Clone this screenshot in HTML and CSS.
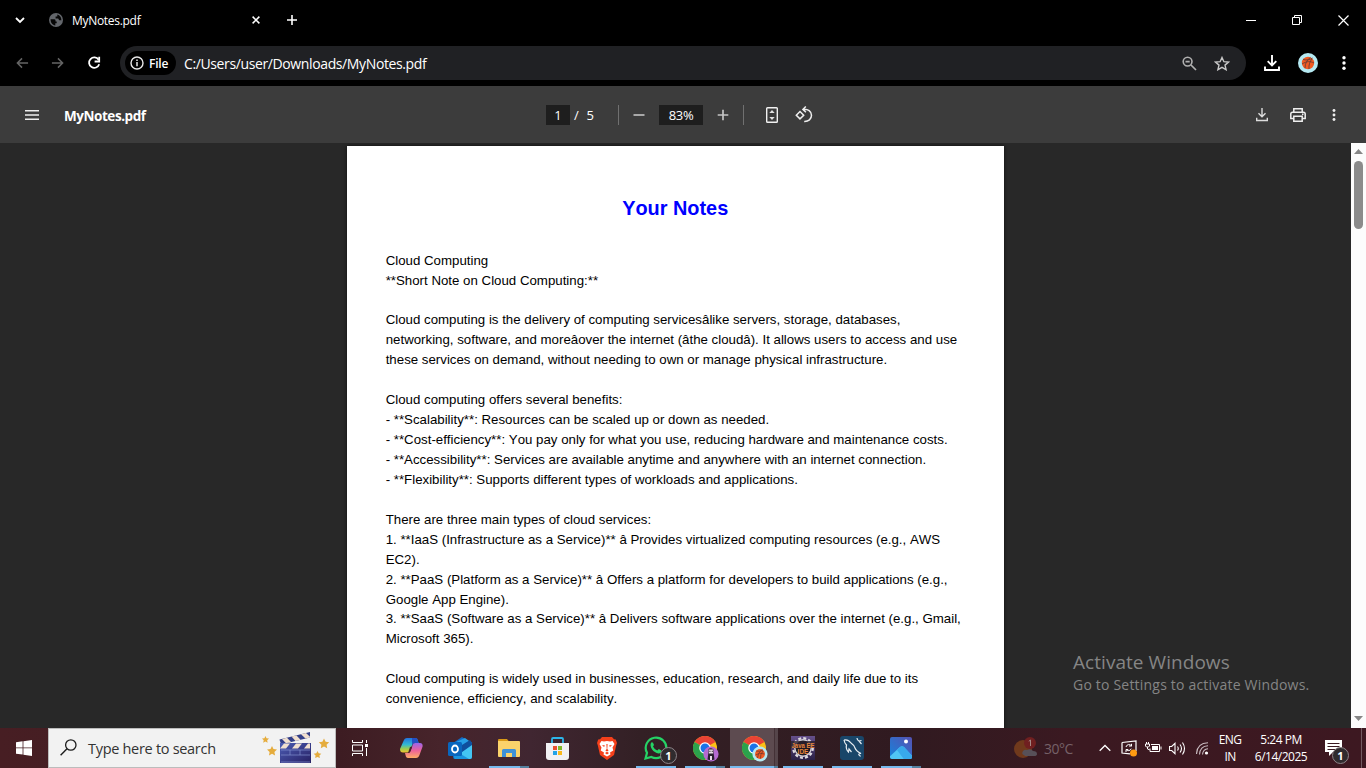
FILE: index.html
```html
<!DOCTYPE html>
<html lang="en">
<head>
<meta charset="utf-8">
<title>MyNotes.pdf</title>
<link rel="stylesheet" href="styles.css">
</head>
<body>
<div class="screen">
  <header class="tabstrip">
    <svg class="tab-search" width="10" height="8" viewBox="0 0 10 8"><path d="M1 2l4 4 4-4" fill="none" stroke="#fff" stroke-width="1.8"/></svg>
    <svg class="favicon" width="14" height="14" viewBox="0 0 14 14"><circle cx="7" cy="7" r="7" fill="#63666b"/><path d="M1.600 6.300h3.600q1.300 0 1.300 1.300v1h1.200v1.600H6.300v2.200C3.600 12.200 1.500 9.800 1.600 6.300zM8.300 1.600v1.800H6.600v2.100h2.600l1 1.700h2.200C12.300 4.300 10.800 2.300 8.300 1.600z" fill="#060606"/></svg>
    <span class="tab-title">MyNotes.pdf</span>
    <svg class="tab-close" width="8" height="8" viewBox="0 0 8 8"><path d="M.6.6l6.800 6.800M7.400.6L.6 7.400" stroke="#fff" stroke-width="1.5"/></svg>
    <svg class="tab-new" width="12" height="12" viewBox="0 0 12 12"><path d="M6 1v10M1 6h10" stroke="#fff" stroke-width="1.6"/></svg>
    <div class="window-buttons">
      <svg width="10" height="11" viewBox="0 0 10 11"><path d="M0 5.500h10" stroke="#fff"/></svg>
      <svg width="10" height="10" viewBox="0 0 10 10"><path d="M.5 2.500h7v7h-7zM2.500 2.500v-2h7v7h-2" fill="none" stroke="#fff"/></svg>
      <svg width="11" height="11" viewBox="0 0 11 11"><path d="M.5.5l10 10M10.500.5l-10 10" stroke="#fff" stroke-width="1.200"/></svg>
    </div>
  </header>

  <nav class="toolbar">
    <svg class="nav-back" width="13" height="12" viewBox="0 0 14 12"><path d="M13 6H1.500M6.500 1l-5 5 5 5" fill="none" stroke="#646464" stroke-width="1.600"/></svg>
    <svg class="nav-forward" width="13" height="12" viewBox="0 0 14 12"><path d="M1 6h11.500M7.500 1l5 5-5 5" fill="none" stroke="#646464" stroke-width="1.600"/></svg>
    <svg class="nav-reload" width="14" height="14" viewBox="0 0 14 14"><path d="M11.600 3.700A5.200 5.200 0 1 0 12.200 8.300" fill="none" stroke="#fff" stroke-width="1.800"/><path d="M12.200.8v4.700H7.600" fill="none" stroke="#fff" stroke-width="1.800"/></svg>
    <div class="omnibox">
      <div class="chip">
        <svg width="14" height="14" viewBox="0 0 14 14"><circle cx="7" cy="7" r="6" fill="none" stroke="#e8e8e8" stroke-width="1.400"/><path d="M7 6v4.300M7 3.500v1.500" stroke="#e8e8e8" stroke-width="1.500"/></svg>
        <span class="chip-label">File</span>
      </div>
      <span class="url">C:/Users/user/Downloads/MyNotes.pdf</span>
      <svg class="zoom-icon" width="15" height="15" viewBox="0 0 15 15"><circle cx="5.600" cy="5.600" r="4.400" fill="none" stroke="#b0b0b0" stroke-width="1.600"/><path d="M9 9l5 5M3.500 5.600h4.200" stroke="#b0b0b0" stroke-width="1.700"/></svg>
      <svg class="star-icon" width="16" height="15" viewBox="0 0 16 15"><path d="M8 1.500l1.900 4.200 4.600.4-3.500 3 1.100 4.600L8 11.300l-4.100 2.400L5 9.100l-3.500-3 4.600-.4z" fill="none" stroke="#c8c8c8" stroke-width="1.400"/></svg>
    </div>
    <svg class="download" width="16" height="16" viewBox="0 0 16 16"><path d="M8 0v10M3.700 6.200L8 10.500l4.300-4.300M1 11.500V15h14v-3.500" fill="none" stroke="#fff" stroke-width="1.900"/></svg>
    <svg class="avatar" width="20" height="20" viewBox="0 0 20 20"><circle cx="10" cy="10" r="10" fill="#b5e9f2"/><circle cx="10" cy="10" r="6.200" fill="#f15a22"/><path d="M5 6.500c4 1 7 .3 9.500-1.500M4 11c5-3 8-3 12-1M7 15.300C7 10 9 7 12.500 4.400M11 16c-.5-4 1-8 3-10" fill="none" stroke="#6c3b32" stroke-width=".9"/></svg>
    <svg class="more" width="4" height="14" viewBox="0 0 4 14"><g fill="#fff"><circle cx="2" cy="1.800" r="1.700"/><circle cx="2" cy="7" r="1.700"/><circle cx="2" cy="12.200" r="1.700"/></g></svg>
  </nav>

  <section class="pdfbar">
    <svg class="menu" width="14" height="10" viewBox="0 0 14 10"><path d="M0 .8h14M0 5h14M0 9.200h14" stroke="#eee" stroke-width="1.500"/></svg>
    <span class="pdf-title">MyNotes.pdf</span>
    <div class="pdf-controls">
      <span class="page-input">1</span><span class="page-total">/&nbsp; 5</span>
      <i class="rule rule-a"></i>
      <svg width="12" height="12" viewBox="0 0 12 12"><path d="M.5 6h11" stroke="#bcbcbc" stroke-width="1.700"/></svg>
      <span class="zoom-input">83%</span>
      <svg width="12" height="12" viewBox="0 0 12 12"><path d="M.7 6h10.600M6 .7v10.600" stroke="#c4c4c4" stroke-width="1.700"/></svg>
      <i class="rule rule-b"></i>
      <svg class="fit" width="12" height="16" viewBox="0 0 12 16"><rect x=".7" y=".7" width="10.600" height="14.600" rx=".8" fill="none" stroke="#f1f1f1" stroke-width="1.400"/><path d="M6 3l2.700 2.900H3.300zM6 13l2.700-2.900H3.300z" fill="#e2e2e2"/></svg>
      <svg class="rotate" width="18" height="17" viewBox="0 0 18 17"><path d="M5 5.500l3.700 3.700L5 12.900 1.300 9.200z" fill="none" stroke="#eee" stroke-width="1.500"/><path d="M8.500 3.200c4.400-.4 8 2.200 8 6.100 0 3.700-3 6.300-7.300 6.100M10.800.5L7.900 3.400l3 2.900" fill="none" stroke="#eee" stroke-width="1.500"/></svg>
    </div>
    <div class="pdf-actions">
      <svg width="12" height="14" viewBox="0 0 12 14"><path d="M6 0v8.500M2.500 5.300L6 8.800l3.500-3.500M.7 9.800v2.700h10.600V9.800" fill="none" stroke="#ddd" stroke-width="1.400"/></svg>
      <svg width="16" height="14" viewBox="0 0 16 14"><path d="M3.800 4V.8h8.400V4M3.500 10.500H.8V6q0-1.800 1.700-1.800h11q1.700 0 1.700 1.800v4.500h-2.700M3.800 8.200h8.400v5H3.800z" fill="none" stroke="#efefef" stroke-width="1.500"/><path d="M12 5.500h1.500V7H12z" fill="#efefef"/></svg>
      <svg class="pdf-more" width="4" height="12" viewBox="0 0 4 12"><g fill="#eee"><circle cx="2" cy="1.500" r="1.450"/><circle cx="2" cy="6" r="1.450"/><circle cx="2" cy="10.500" r="1.450"/></g></svg>
    </div>
  </section>

  <main class="viewer">
    <article class="page">
      <h1>Your Notes</h1>
      <div class="notes">Cloud Computing
**Short Note on Cloud Computing:**

Cloud computing is the delivery of computing servicesâlike servers, storage, databases,
networking, software, and moreâover the internet (âthe cloudâ). It allows users to access and use
these services on demand, without needing to own or manage physical infrastructure.

Cloud computing offers several benefits:
- **Scalability**: Resources can be scaled up or down as needed.
- **Cost-efficiency**: You pay only for what you use, reducing hardware and maintenance costs.
- **Accessibility**: Services are available anytime and anywhere with an internet connection.
- **Flexibility**: Supports different types of workloads and applications.

There are three main types of cloud services:
1. **IaaS (Infrastructure as a Service)** â Provides virtualized computing resources (e.g., AWS
EC2).
2. **PaaS (Platform as a Service)** â Offers a platform for developers to build applications (e.g.,
Google App Engine).
3. **SaaS (Software as a Service)** â Delivers software applications over the internet (e.g., Gmail,
Microsoft 365).

Cloud computing is widely used in businesses, education, research, and daily life due to its
convenience, efficiency, and scalability.</div>
    </article>
    <div class="scrollbar">
      <svg width="9" height="5" viewBox="0 0 9 5"><path d="M4.500 0L9 5H0z" fill="#868686"/></svg>
      <i class="thumb"></i>
      <svg class="arrow-down" width="9" height="5" viewBox="0 0 9 5"><path d="M4.500 5L9 0H0z" fill="#868686"/></svg>
    </div>
    <div class="watermark">
      <p class="wm-title">Activate Windows</p>
      <p class="wm-text">Go to Settings to activate Windows.</p>
    </div>
  </main>

  <footer class="taskbar">
    <div class="start"><svg width="16" height="16" viewBox="0 0 16 16"><path d="M0 2.300l6.600-1v6.200H0zM7.400 1.200L16 0v7.500H7.400zM0 8.300h6.600v6.300l-6.600-.9zM7.400 8.300H16V16l-8.600-1.200z" fill="#fff"/></svg></div>
    <div class="search">
      <svg class="lens" width="17" height="17" viewBox="0 0 17 17"><circle cx="10.800" cy="6" r="5.200" fill="none" stroke="#1c1c1c" stroke-width="1.300"/><path d="M7 9.700L.6 16.300" stroke="#1c1c1c" stroke-width="1.400"/></svg>
      <span class="search-text">Type here to search</span>
      <svg class="clapper" width="68" height="34" viewBox="0 0 68 34">
        <defs><linearGradient id="board" x1="0" y1="0" x2="1" y2="1"><stop offset="0" stop-color="#4b5cb4"/><stop offset="1" stop-color="#272063"/></linearGradient></defs>
        <path d="M17.500 8.500L48 1v5.500L19 13.500z" fill="#344089"/>
        <path d="M20 8l5-1.300 4 4.400-5 1.200zM29.500 5.600l5-1.200 4 4.300-5 1.200zM39 3.200l5-1.200 4 3.800v.8l-4.500 1z" fill="#f0dfcf"/>
        <path d="M18 12h31v20H18z" fill="url(#board)"/>
        <path d="M18 17.500l4-5h6l-4 5zM30 17.500l4-5h6l-4 5zM42 17.500l4-5h2v5z" fill="#f0dfcf"/>
        <path d="M19 19h29M19 24h29M28 19v5M38 19v5M19 31h29" stroke="#8190ce" stroke-width=".7"/>
        <g fill="#e5ac3d"><path d="M10 15l1.500 3.100 3.500.5-2.600 2.300.7 3.500-3.100-1.700L7 24.400l.6-3.500L5 18.600l3.500-.5z"/><path d="M3.500 5l1 2.200 2.500.3-1.800 1.700.4 2.500-2.200-1.200-2.200 1.200.5-2.500L0 7.500l2.400-.3z"/><path d="M62 7.500l1.600 3.200 3.600.5-2.600 2.500.6 3.600-3.200-1.700-3.200 1.700.6-3.600-2.600-2.500 3.600-.5z"/><path d="M55.500 20l1.200 2.300 2.600.4-1.900 1.800.5 2.600-2.400-1.200-2.300 1.200.4-2.600-1.900-1.800 2.600-.4z"/></g>
      </svg>
    </div>
    <div class="apps">
      <div class="app"><svg class="taskview" width="17" height="16" viewBox="0 0 17 16"><path d="M.5 0v2.500h10V0M.5 16v-2.500h10V16M.5 5h10v6H.5zM14.500 0v3M14.500 8v8" fill="none" stroke="#fff"/><path d="M13 4h3v3h-3z" fill="#fff"/></svg></div>
      <div class="app"><svg class="copilot" width="23" height="22" viewBox="0 0 23 22">
        <defs><linearGradient id="ca" x1="0" y1="0" x2="0" y2="1"><stop offset="0" stop-color="#2373df"/><stop offset=".45" stop-color="#31b9d3"/><stop offset=".75" stop-color="#9dcd4c"/><stop offset="1" stop-color="#f4c330"/></linearGradient><linearGradient id="cb" x1="0" y1="0" x2="0" y2="1"><stop offset="0" stop-color="#9a65ed"/><stop offset=".5" stop-color="#ed6299"/><stop offset="1" stop-color="#ffad65"/></linearGradient></defs>
        <path d="M7 1h8.500q2 0 2.500 3l.7 2h-4q-2 0-2.600 2l-2 5.500q-.7 2-2.600 2H3q-3 0-3-3.500L3.500 4Q4.500 1 7 1z" fill="url(#ca)"/><path d="M12 1h3.500q2 0 2.500 3l.7 2h-4q-2 0-2.600 2z" fill="#244fc4"/>
        <path d="M16 21H8q-2 0-2.500-3L5 16h3q2 0 2.600-2l2-6q.6-2 2.600-2H20q3 0 2.600 3.500L19.500 18q-1 3-3.500 3z" fill="url(#cb)"/><path d="M12.300 9.500L10.600 14q-.6 2-2.600 2l2-6z" fill="#47242b"/></svg></div>
      <div class="app"><svg width="24" height="23" viewBox="0 0 24 23"><path d="M5 6l9-6 10 6v14q0 2-2 2H7q-2 0-2-2z" fill="#126ac5"/><path d="M8 5l9-4 7 5v5l-10 6-8-7z" fill="#269fe7"/><path d="M14 15l10-8v13q0 2-2 2H8z" fill="#43c5f3"/><path d="M14 8l8-5 2 3v2l-10 7z" fill="#0f4f9e"/><path d="M6 13l15 9H7q-1 0-1-2z" fill="#1a94de"/><rect y="5" width="14" height="14" rx="1.500" fill="#0966be"/><ellipse cx="7" cy="12" rx="3" ry="3.500" fill="none" stroke="#fff" stroke-width="1.800"/></svg></div>
      <div class="app open grouped"><svg width="22" height="18" viewBox="0 0 22 18"><path d="M0 1q0-1 1-1h8l2 2.500H0z" fill="#d99a17"/><path d="M0 2h21q1 0 1 1v14q0 1-1 1H1q-1 0-1-1z" fill="#fbd36b"/><path d="M4 18v-6.500q0-1.500 1.500-1.500h11q1.500 0 1.500 1.500V18h-4v-4H8v4z" fill="#3e91d8"/></svg></div>
      <div class="app"><svg width="23" height="23" viewBox="0 0 23 23"><path d="M6 6V2q0-1 1-1h9q1 0 1 1v4" fill="none" stroke="#2cb5e9" stroke-width="1.800"/><path d="M0 6h23v14q0 3-3 3H3q-3 0-3-3z" fill="#f1f1f3"/><path d="M7 9h4v4H7z" fill="#e9512f"/><path d="M12 9h4v4h-4z" fill="#7fb928"/><path d="M7 14h4v4H7z" fill="#22a4e8"/><path d="M12 14h4v4h-4z" fill="#fab91b"/></svg></div>
      <div class="app"><svg width="20" height="23" viewBox="0 0 20 23"><path d="M5 0h10l2 2.200 1.800.2L20 6l-.7 2L17 18l-7 5-7-5L.7 8 0 6l1.200-3.600L3 2.200z" fill="#f5401b"/><path d="M4.500 4l2.500.5L10 4l3 .5 2.500-.5 2 3-2 3.500.8 3-3.300 2 .5 2L10 19.500l-3.500-2 .5-2-3.300-2 .8-3L2.500 7z" fill="#fff"/><path d="M5 8l3 .5-1 1.600zM15 8l-3 .5 1 1.600zM9.400 7h1.200l-.3 5 1.300 1.500-1.600 1-1.600-1L9.700 12zM8 16l2-1.200 2 1.200-2 1.500z" fill="#f5401b"/></svg></div>
      <div class="app open"><svg width="24" height="24" viewBox="0 0 24 24"><path d="M1.500 22.500L3 16.800A10.300 10.300 0 1 1 7.300 21z" fill="none" stroke="#25d366" stroke-width="2.200"/><path d="M7 6.800q1-1.200 2 0l1 2.300-1 1.500q1.200 2.800 4.300 4l1.500-1.500 2.700 1.300q.4 2.800-3 3C9.500 17 5 11 7 6.800z" fill="#25d366"/></svg><b class="badge badge-app">1</b></div>
      <div class="app open grouped"><svg class="chrome" width="26" height="26" viewBox="0 0 26 26"><circle cx="12" cy="12" r="12" fill="#fbc116"/><path d="M12 12L1.600 6A12 12 0 0 1 22.400 6z" fill="#e94335"/><path d="M12 12L1.600 6A12 12 0 0 0 12 24l5-9z" fill="#2ba24c"/><circle cx="12" cy="12" r="5.800" fill="#fff"/><circle cx="12" cy="12" r="4.500" fill="#1a73e8"/><circle cx="18" cy="18" r="7.600" fill="#b66ad1"/><path d="M15.500 13q2.500-1.500 5 .5l.2 4 .8 6q-3.500 1.500-7 0l.8-6z" fill="#292030"/><path d="M15.800 13.500h4.400v4h-4.400zM17 20h2v4h-2z" fill="#e9dce7"/><path d="M16.300 15.300h1.200M18.700 15.300h1.200" stroke="#292030"/></svg></div>
      <div class="app open active"><svg class="chrome" width="26" height="26" viewBox="0 0 26 26"><circle cx="12" cy="12" r="12" fill="#fbc116"/><path d="M12 12L1.600 6A12 12 0 0 1 22.400 6z" fill="#e94335"/><path d="M12 12L1.600 6A12 12 0 0 0 12 24l5-9z" fill="#2ba24c"/><circle cx="12" cy="12" r="5.800" fill="#fff"/><circle cx="12" cy="12" r="4.500" fill="#1a73e8"/><circle cx="18" cy="18" r="7.600" fill="#b5e9f2"/><circle cx="18" cy="18" r="4.900" fill="#f15a22"/><path d="M14 15q4 1 7-1M13.500 19q4-3 9-1M15.500 22q0-5 4.500-8.500M18.500 22.500q-.5-4 2.500-7.500" fill="none" stroke="#733a2d" stroke-width=".8"/></svg></div>
      <div class="app open"><svg width="24" height="24" viewBox="0 0 24 24"><defs><linearGradient id="je" x1="0" y1="0" x2="0" y2="1"><stop offset="0" stop-color="#66508b"/><stop offset="1" stop-color="#2a2045"/></linearGradient></defs><rect width="24" height="24" fill="url(#je)"/><circle cx="12" cy="12" r="9.800" fill="none" stroke="#dedbe0" stroke-width="2.200" stroke-dasharray="3 2.130"/><circle cx="12" cy="12" r="8.200" fill="#1b1822" stroke="#d5d0d8" stroke-width="1.400"/><path d="M0 5h24v7H0z" fill="#2b202d" opacity=".8"/><text class="je-text" x="12" y="11.500" textLength="23" lengthAdjust="spacingAndGlyphs">Java EE</text><text class="je-text" x="12" y="17.500">IDE</text></svg></div>
      <div class="app open"><svg width="24" height="24" viewBox="0 0 24 24"><rect width="24" height="24" rx="3" fill="#194669"/><path d="M4 4q4-1 7 3 3 2 4 5 1 3 6 5.500-3 0-2 1.500 1 .5 1.500 1.500M4 4q.5 3 2.500 5-1 4 2 7l.5-3 2.500 3M17 2q0 2 2 3l2.500 3M19 5l2.500-.5" fill="none" stroke="#e8eef3" stroke-width="1.200"/></svg></div>
      <div class="app open grouped"><svg width="22" height="22" viewBox="0 0 22 22"><defs><linearGradient id="ph" x1="0" y1="1" x2="1" y2="0"><stop offset="0" stop-color="#1583dc"/><stop offset="1" stop-color="#5651b2"/></linearGradient><clipPath id="phc"><rect width="22" height="22" rx="2"/></clipPath></defs><g clip-path="url(#phc)"><rect width="22" height="22" fill="url(#ph)"/><path d="M-2 21L10 10q2-1.500 4 0l10 11v4H-2z" fill="#50c5f5"/><path d="M10 10q2-1.500 4 0l10 11v4H16L7 13z" fill="#38a9eb"/></g><circle cx="16" cy="4.500" r="2" fill="#fff"/></svg></div>
    </div>
    <div class="tray">
      <div class="weather"><svg width="23" height="22" viewBox="0 0 23 22"><circle cx="9" cy="12" r="9" fill="#70391c"/><circle cx="16" cy="6" r="6" fill="#701f20"/><path d="M10 18q-3-1-1-4 2-2 4-1 4-2 6 1 4 0 4 3 0 2-3 2h-9z" fill="#575058"/><path d="M14.800 4.300L16.500 3v6" stroke="#a48785" fill="none"/></svg><span class="temp">30°C</span></div>
      <svg class="chevron" width="12" height="8" viewBox="0 0 12 8"><path d="M.7 6.800L6 1.500l5.300 5.300" fill="none" stroke="#fff" stroke-width="1.300"/></svg>
      <svg class="update" width="17" height="17" viewBox="0 0 17 17"><path d="M1 2.500L15 1v10M1 2.500V13l8 .9" fill="none" stroke="#fff" stroke-width="1.200"/><path d="M10.500 6A3 3 0 0 0 5 7M10.500 3.800V6H8M5 9.500a3 3 0 0 0 5.200-.8M5 12V9.500h2.300" fill="none" stroke="#fff"/><circle cx="12.500" cy="13" r="3.500" fill="#ff9a12"/></svg>
      <svg class="battery" width="17" height="12" viewBox="0 0 17 12"><path d="M6 2.500h8.500v7H5v-3M16 4.500v3M1.500 0v2M3.500 0v2M.5 2h4v2L3.500 5h-2L.5 4zM2.500 5v2q0 .5 2 .5" fill="none" stroke="#fff"/><path d="M7 4h6v4H7z" fill="#fff"/></svg>
      <svg class="volume" width="17" height="13" viewBox="0 0 17 13"><path d="M.5 4.500h2.200L6 1.300v10.400L2.700 8.500H.5zM8.500 4.500q1.500 2 0 4M11 2.500q3 4 0 8M13.500.5q4 6 0 12" fill="none" stroke="#fff" stroke-width="1.100"/></svg>
      <svg class="wifi" width="13" height="13" viewBox="0 0 13 13"><path d="M.5 12Q1 1 12 .7M3.500 12.500Q4 4 12 3.700M6.500 12.500Q7 7 12 6.700" fill="none" stroke="#c9bcc1" stroke-width="1.100"/><circle cx="10.500" cy="11" r="1.600" fill="#fff"/></svg>
      <div class="lang"><span>ENG</span><span>IN</span></div>
      <div class="clock"><span class="time">5:24 PM</span><span class="date">6/14/2025</span></div>
      <div class="notify"><svg width="17" height="17" viewBox="0 0 17 17"><path d="M0 0h17v12H8l-4 4v-4H0z" fill="#fff"/><path d="M2.500 3.500h12M2.500 6.500h12M2.500 9.500h8" stroke="#3b1a22"/></svg><b class="badge badge-notify">1</b></div>
      <i class="peek"></i>
    </div>
  </footer>
</div>
</body>
</html>
```
FILE: styles.css
```css
* { box-sizing: border-box; }
body {
  margin: 0;
  overflow: hidden;
  background: #000;
  color: #fff;
  font-family: "Open Sans", "Noto Sans", sans-serif;
}
svg { display: block; flex: none; }
span { white-space: nowrap; }
.screen { display: flex; flex-direction: column; width: 1366px; height: 768px; }

/* Tab strip */
.tabstrip { display: flex; align-items: center; height: 40px; padding-left: 15px; }
.favicon { margin-left: 24px; }
.tab-title { width: 180px; margin-left: 9px; font-size: 12px; letter-spacing: -0.3px; }
.tab-new { margin-left: 26px; }
.window-buttons { display: flex; gap: 36px; align-items: center; margin-left: auto; margin-right: 17px; }

/* Address bar */
.toolbar { display: flex; align-items: center; height: 46px; padding-left: 16px; }
.nav-forward { margin-left: 22px; }
.nav-reload { margin-left: 23px; }
.omnibox { display: flex; align-items: center; width: 1126px; height: 34px; margin-left: 19px; padding-left: 5px; border-radius: 17px; background: #202124; }
.chip { display: flex; align-items: center; width: 51px; height: 24px; padding-left: 5px; border-radius: 12px; background: #000; }
.chip-label { margin-left: 5px; font-size: 12px; font-weight: 600; letter-spacing: -0.2px; }
.url { margin-left: 8px; font-size: 14px; letter-spacing: -0.38px; }
.zoom-icon { margin-left: auto; }
.star-icon { margin: 0 16px 0 17px; }
.download { margin-left: 18px; }
.avatar { margin-left: 18px; }
.more { margin-left: 24px; }

/* Document toolbar */
.pdfbar { display: flex; align-items: center; height: 57px; padding-left: 25px; background: #3c3c3c; }
.pdf-title { width: 482px; margin: 2px 0 0 25px; font-size: 13.5px; font-weight: 700; letter-spacing: -0.45px; }
.pdf-controls { display: flex; align-items: center; height: 20px; font-size: 13px; line-height: 20px; }
.page-input, .zoom-input { height: 20px; background: #1e1e1e; text-align: center; }
.page-input { width: 24px; }
.page-total { width: 48px; padding-left: 4px; word-spacing: 0.5px; }
.rule { width: 1px; height: 20px; background: #707070; }
.rule-a { margin-right: 14px; }
.zoom-input { width: 44px; margin: 0 14px; letter-spacing: -0.3px; }
.rule-b { margin-left: 14px; }
.fit { margin-left: 22px; }
.rotate { margin-left: 17px; }
.pdf-actions { display: flex; align-items: center; gap: 22px; margin-left: auto; margin-right: 30px; }
.pdf-more { margin-left: 4px; }

/* Document area */
.viewer { position: relative; display: flex; height: 585px; overflow: hidden; background: #282828; }
.page { width: 657px; height: 640px; margin: 3px 0 0 347px; padding: 47px 0 0 38.7px; background: #fff; color: #000; font-family: "Liberation Sans", Arial, sans-serif; font-kerning: none; font-variant-ligatures: none; box-shadow: 0 0 4px #111; }
.page h1 { width: 579px; margin: 0; color: #00f; font-size: 19.9px; line-height: 30px; text-align: center; }
.notes { margin-top: 27.6px; font-size: 13.28px; line-height: 19.944px; white-space: pre; }
.scrollbar { display: flex; flex-direction: column; align-items: center; width: 15px; margin-left: auto; padding: 6px 0 7px; background: #fcfcfc; }
.thumb { width: 9px; height: 68px; margin-top: 7px; border-radius: 5px; background: #8b8b8b; }
.arrow-down { margin-top: auto; }
.watermark { position: absolute; left: 1073px; top: 506px; color: #858585; }
.watermark p { margin: 0; white-space: nowrap; }
.wm-title { font-size: 19px; line-height: 26px; letter-spacing: 0.05px; }
.wm-text { font-size: 14px; line-height: 20px; letter-spacing: 0.2px; }

/* Taskbar */
.taskbar { display: flex; height: 40px; background: linear-gradient(90deg, #471e23 0, #3d1c22 340px, #47242b 440px, #402631 530px, #332025 640px, #301a20 900px, #3b1921 1080px, #3d1821 1366px); }
.start { display: flex; align-items: center; justify-content: center; width: 48px; }
.search { display: flex; align-items: center; width: 288px; border: 1px solid #bcbcbc; background: #f2f2f2; }
.lens { margin: 0 0 2px 11px; }
.search-text { width: 174px; margin-left: 11px; color: #333; font-size: 14.5px; letter-spacing: -0.3px; }
.apps { display: flex; padding-left: 1px; }
.app { position: relative; display: flex; align-items: center; justify-content: center; width: 49px; height: 40px; }
.taskview { margin-right: 2px; }
.copilot { margin-left: 1px; }
.open::after { position: absolute; left: 5px; bottom: 0; width: 40px; height: 2px; background: #76b9ed; content: ""; }
.grouped::after { background: linear-gradient(90deg, #76b9ed 31px, #54809f 31px); }
.active { background: linear-gradient(90deg, transparent 1px, #5d4b50 1px, #5d4b50 45px, #443136 45px, #443136 46px, #55454a 46px); }
.active::after { left: 1px; width: 48px; background: linear-gradient(90deg, #76b9ed 44px, #54809f 44px); }
.chrome { margin: 2px 0 0 3px; }
.je-text { fill: #e6853b; font: bold 6.5px "Liberation Sans", sans-serif; text-anchor: middle; }
.badge { position: absolute; display: flex; align-items: center; justify-content: center; width: 17px; height: 17px; border: 1px solid #8d8388; border-radius: 50%; background: #302b2e; font-size: 11px; line-height: 1; }
.badge-app { left: 29px; top: 19px; }
.badge-notify { left: 7px; top: 7px; }
.tray { display: flex; align-items: center; margin-left: auto; width: 352px; }
.weather { display: flex; align-items: center; width: 85px; }
.temp { margin-left: 7px; color: #766168; font-size: 14px; letter-spacing: -0.5px; }
.update { margin-left: 10px; }
.battery { margin-left: 7px; }
.volume { margin-left: 7px; }
.wifi { margin-left: 10px; }
.lang, .clock { display: flex; flex: none; flex-direction: column; align-items: center; font-size: 12px; line-height: 17px; }
.lang { width: 30px; margin-left: 6px; letter-spacing: -0.6px; }
.clock { width: 60px; margin-left: 6px; letter-spacing: -0.5px; }
.notify { position: relative; flex: none; width: 24px; height: 17px; margin-left: 14px; }
.peek { width: 1px; height: 40px; margin-left: 12px; background: #735a61; }
```
